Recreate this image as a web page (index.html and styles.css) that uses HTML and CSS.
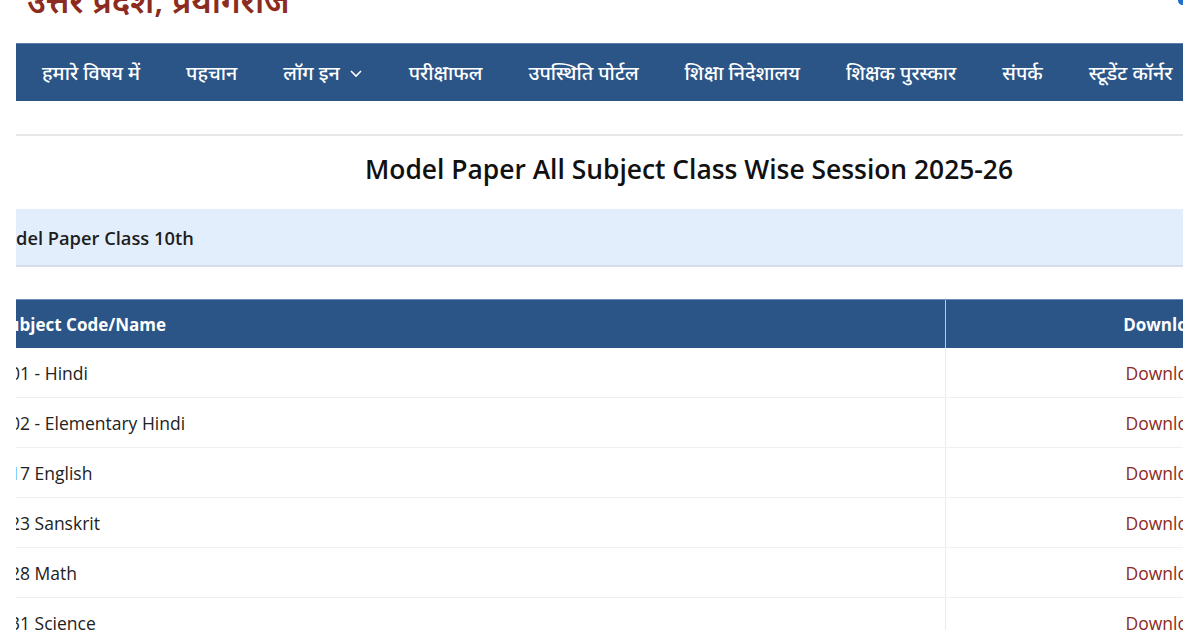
FILE: index.html
```html
<!DOCTYPE html>
<html lang="hi">
<head>
<meta charset="utf-8">
<title>Model Paper</title>
<link rel="stylesheet" href="styles.css">
</head>
<body>
<div class="page">
  <header class="masthead">
    <div class="org">उत्तर प्रदेश, प्रयागराज</div>
    <span class="logo-dot"></span>
  </header>
  <nav class="nav">
    <a class="nav-item">हमारे विषय में</a>
    <a class="nav-item">पहचान</a>
    <a class="nav-item">लॉग इन <svg class="chev" width="14" height="10" viewBox="0 0 14 10"><polyline points="2,3 7,8 12,3" fill="none" stroke="#fff" stroke-width="1.6"/></svg></a>
    <a class="nav-item">परीक्षाफल</a>
    <a class="nav-item">उपस्थिति पोर्टल</a>
    <a class="nav-item">शिक्षा निदेशालय</a>
    <a class="nav-item">शिक्षक पुरस्कार</a>
    <a class="nav-item">संपर्क</a>
    <a class="nav-item">स्टूडेंट कॉर्नर</a>
  </nav>
  <div class="rule"></div>
  <div class="clip">
    <div class="inner">
      <h1 class="title">Model Paper All Subject Class Wise Session 2025-26</h1>
      <div class="band">Model Paper Class 10th</div>
      <table class="papers">
        <thead>
          <tr><th class="c-name">Subject Code/Name</th><th class="c-dl">Download</th></tr>
        </thead>
        <tbody>
          <tr><td class="c-name">101 - Hindi</td><td class="c-dl"><a>Download</a></td></tr>
          <tr><td class="c-name">102 - Elementary Hindi</td><td class="c-dl"><a>Download</a></td></tr>
          <tr><td class="c-name">117 English</td><td class="c-dl"><a>Download</a></td></tr>
          <tr><td class="c-name">123 Sanskrit</td><td class="c-dl"><a>Download</a></td></tr>
          <tr><td class="c-name">128 Math</td><td class="c-dl"><a>Download</a></td></tr>
          <tr><td class="c-name">131 Science</td><td class="c-dl"><a>Download</a></td></tr>
        </tbody>
      </table>
    </div>
  </div>
</div>
</body>
</html>
```

FILE: styles.css
```css
html, body {
  margin: 0;
  padding: 0;
  background: #fff;
  font-family: "Open Sans", "Noto Sans", sans-serif;
  color: #222;
}
.page {
  padding: 0 17px 0 16px;
  height: 630px;
  overflow: hidden;
}
.masthead {
  height: 43px;
  display: flex;
  justify-content: space-between;
  align-items: flex-start;
  overflow: hidden;
}
.org {
  margin-top: -19px;
  padding-left: 11px;
  font-size: 33px;
  line-height: 40px;
  font-weight: 600;
  color: #8c2b20;
  white-space: nowrap;
}
.logo-dot {
  width: 9px;
  height: 9px;
  margin-top: -4px;
  margin-right: -4px;
  border-radius: 50%;
  background: #1f6fd0;
}
.nav {
  height: 57px;
  background: #2b5587;
  border-top: 1px solid #5d80ad;
  display: flex;
  align-items: center;
  padding-left: 26px;
  gap: 46px;
  white-space: nowrap;
  overflow: hidden;
}
.nav-item {
  color: #fff;
  font-size: 19.6px;
  font-weight: 500;
  display: flex;
  align-items: center;
  gap: 9px;
}
.chev { display: block; }
.rule {
  margin-top: 33px;
  height: 2px;
  background: #e8e8e8;
}
.clip {
  overflow: hidden;
}
.inner {
  width: 1426px;
  margin-left: -40px;
}
.title {
  margin: 16px 0 0;
  height: 57px;
  line-height: 34px;
  text-align: center;
  font-size: 26.4px;
  font-weight: 600;
  color: #111;
}
.band {
  height: 56px;
  line-height: 58px;
  background: #e3eefc;
  border-bottom: 2px solid #d5dfec;
  padding-left: 12px;
  font-size: 18.3px;
  font-weight: 600;
  color: #1d1d1d;
  margin-bottom: 32px;
}
.papers {
  width: 100%;
  border-collapse: collapse;
}
.papers th {
  background: #2b5587;
  color: #fff;
  font-size: 17px;
  font-weight: 700;
  height: 48px;
  padding: 0 22px;
  border-top: 1px solid #6a8cb8;
}
.papers th.c-name { text-align: left; padding-left: 23px; }
.papers th.c-dl { border-left: 1px solid #b8cce6; text-align: center; padding-right: 38px; }
.papers td {
  height: 49px;
  padding: 0 22px 0 24px;
  font-size: 17.5px;
  border-bottom: 1px solid #eef0f4;
  color: #222;
}
.papers .c-name { width: 923px; }
.papers td.c-dl { border-left: 1px solid #e6ecf5; text-align: center; padding-right: 38px; }
.papers td a { color: #8a2a22; }
```
